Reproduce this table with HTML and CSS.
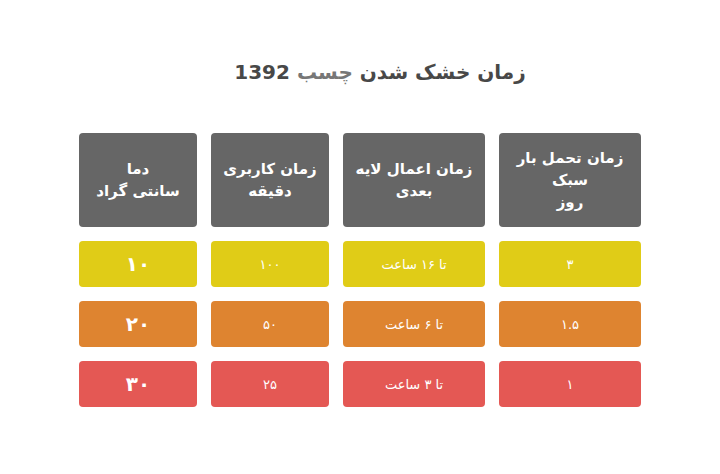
FILE: index.html
```html
<!DOCTYPE html>
<html lang="fa" dir="rtl">
<head>
<meta charset="utf-8">
<link rel="stylesheet" href="styles.css">
</head>
<body>
<div class="page">
  <h1 class="title">زمان خشک شدن <span class="light">چسب</span> 1392</h1>
  <div class="grid">
    <div class="cell head">زمان تحمل بار<br>سبک<br>روز</div>
    <div class="cell head">زمان اعمال لایه<br>بعدی</div>
    <div class="cell head">زمان کاربری<br>دقیقه</div>
    <div class="cell head">دما<br>سانتی گراد</div>

    <div class="cell yellow">۳</div>
    <div class="cell yellow">تا ۱۶ ساعت</div>
    <div class="cell yellow">۱۰۰</div>
    <div class="cell yellow big">۱۰</div>

    <div class="cell orange">۱.۵</div>
    <div class="cell orange">تا ۶ ساعت</div>
    <div class="cell orange">۵۰</div>
    <div class="cell orange big">۲۰</div>

    <div class="cell red">۱</div>
    <div class="cell red">تا ۳ ساعت</div>
    <div class="cell red">۲۵</div>
    <div class="cell red big">۳۰</div>
  </div>
</div>
</body>
</html>
```
FILE: styles.css
```css
html, body {
  margin: 0;
  padding: 0;
  background: #ffffff;
}
body {
  font-family: "DejaVu Sans", "Noto Sans", sans-serif;
  width: 720px;
  height: 474px;
  overflow: hidden;
}
.page {
  padding-top: 58px;
}
.title {
  margin: 0;
  padding-left: 40px;
  text-align: center;
  font-size: 20px;
  line-height: 29px;
  font-weight: bold;
  color: #484848;
}
.title .light {
  color: #777777;
}
.grid {
  margin: 46px auto 0;
  width: 562px;
  display: grid;
  grid-template-columns: 142px 142px 118px 118px;
  grid-template-rows: 94px 46px 46px 46px;
  column-gap: 14px;
  row-gap: 14px;
}
.cell {
  border-radius: 4px;
  color: #ffffff;
  display: flex;
  align-items: center;
  justify-content: center;
  text-align: center;
  font-size: 13px;
}
.head {
  background: #666666;
  font-size: 15px;
  font-weight: bold;
  line-height: 22px;
}
.yellow { background: #e0cc17; }
.orange { background: #de8430; }
.red { background: #e45854; }
.big {
  font-size: 20px;
  font-weight: bold;
}
```
